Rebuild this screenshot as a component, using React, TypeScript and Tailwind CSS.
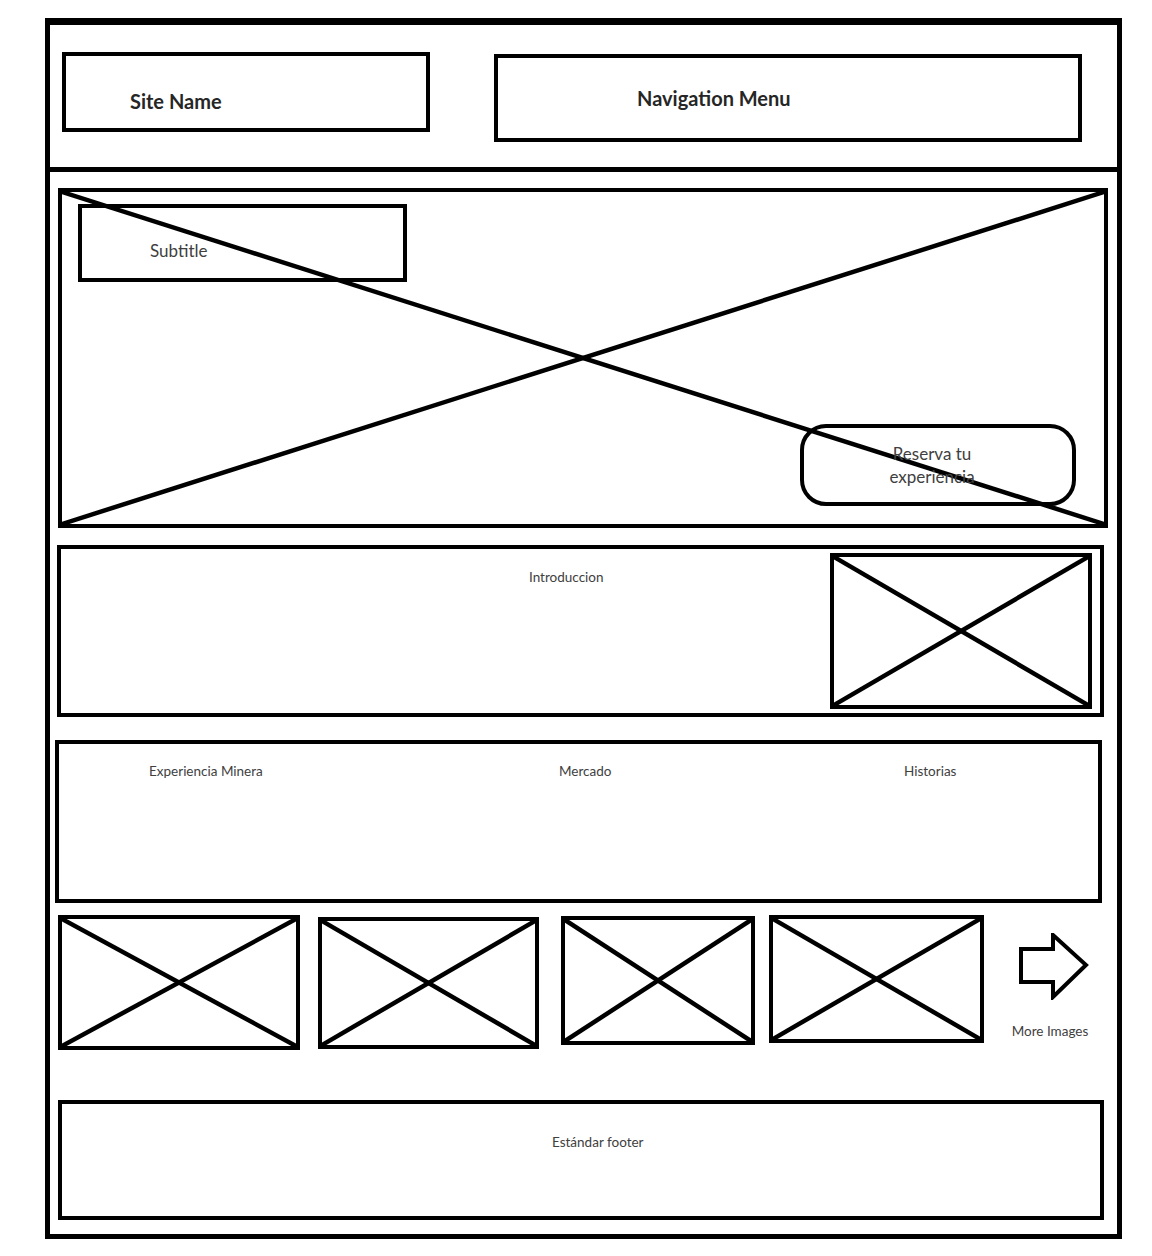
import React from "react";

const font = { fontFamily: "Lato, 'Open Sans', sans-serif" };

// box with an X drawn across, the usual wireframe image placeholder
const Crossed = ({ className = "", children }: { className?: string; children?: React.ReactNode }) => (
  <div className={`relative border-4 border-black ${className}`}>
    <svg className="absolute inset-0 w-full h-full" preserveAspectRatio="none" viewBox="0 0 100 100">
      <line x1="0" y1="0" x2="100" y2="100" stroke="black" strokeWidth="4.5" vectorEffect="non-scaling-stroke" />
      <line x1="0" y1="100" x2="100" y2="0" stroke="black" strokeWidth="4.5" vectorEffect="non-scaling-stroke" />
    </svg>
    {children}
  </div>
);

const App = () => {
  return (
    <div className="w-[1152px] h-[1256px] bg-white pt-[18px] pl-[45px]" style={font}>
      <div className="w-[1077px] h-[1221px] border-[5px] border-t-[7px] border-black">
        {/* Header */}
        <header className="h-[147px] border-b-[5px] border-black flex items-start">
          <div className="ml-[12px] mt-[27px] w-[368px] h-[80px] border-4 border-black pl-[64px] pt-[33px]">
            <span className="text-[20px] leading-[24px] font-bold text-[#262626]">Site Name</span>
          </div>
          <div className="ml-[64px] mt-[29px] w-[588px] h-[88px] border-4 border-black pl-[139px] pt-[28px]">
            <span className="text-[20px] leading-[24px] font-bold text-[#262626]">Navigation Menu</span>
          </div>
        </header>

        {/* Hero */}
        <Crossed className="ml-[8px] mt-[16px] w-[1050px] h-[340px]">
          <div className="absolute left-[16px] top-[12px] w-[329px] h-[78px] border-4 border-black pl-[68px] pt-[31px]">
            <span className="text-[17px] leading-[24px] text-[#404040]">Subtitle</span>
          </div>
          <div className="absolute left-[738px] top-[232px] w-[276px] h-[82px] border-4 border-black rounded-[26px] flex items-center justify-center">
            <span className="text-[17px] leading-[23px] text-[#404040] text-center ml-[-12px]">
              Reserva tu
              <br />
              experiencia
            </span>
          </div>
        </Crossed>

        {/* Introduccion */}
        <section className="ml-[7px] mt-[17px] w-[1047px] h-[172px] border-4 border-black flex items-start">
          <div className="flex-1 pl-[468px] pt-[15px]">
            <span className="text-[13.5px] leading-[18px] text-[#404040]">Introduccion</span>
          </div>
          <Crossed className="mt-[4px] mr-[8px] w-[262px] h-[156px]" />
        </section>

        {/* Categorias */}
        <section className="ml-[5px] mt-[23px] w-[1047px] h-[163px] border-4 border-black flex items-start pl-[90px] pt-[18px] text-[13.5px] leading-[18px] text-[#404040]">
          <span className="w-[410px]">Experiencia Minera</span>
          <span className="w-[345px]">Mercado</span>
          <span>Historias</span>
        </section>

        {/* Galeria */}
        <section className="ml-[8px] mt-[12px] flex items-start">
          <Crossed className="w-[242px] h-[135px]" />
          <Crossed className="ml-[18px] mt-[2px] w-[221px] h-[132px]" />
          <Crossed className="ml-[22px] mt-[1px] w-[194px] h-[129px]" />
          <Crossed className="ml-[14px] w-[215px] h-[128px]" />
          <div className="ml-[26px] w-[80px] flex flex-col items-center">
            <svg className="mt-[18px] ml-[6px]" width="71" height="67" viewBox="0 0 71 67">
              <polygon points="3,16 35,16 35,2 68,32 35,64 35,49 3,49" fill="none" stroke="black" strokeWidth="4" strokeLinejoin="miter" />
            </svg>
            <span className="mt-[22px] text-[13.5px] leading-[18px] text-[#404040] whitespace-nowrap">More Images</span>
          </div>
        </section>

        {/* Footer */}
        <footer className="ml-[8px] mt-[50px] w-[1046px] h-[120px] border-4 border-black pl-[490px] pt-[25px]">
          <span className="text-[13.5px] leading-[18px] text-[#404040]">Estándar footer</span>
        </footer>
      </div>
    </div>
  );
};

export default App;
